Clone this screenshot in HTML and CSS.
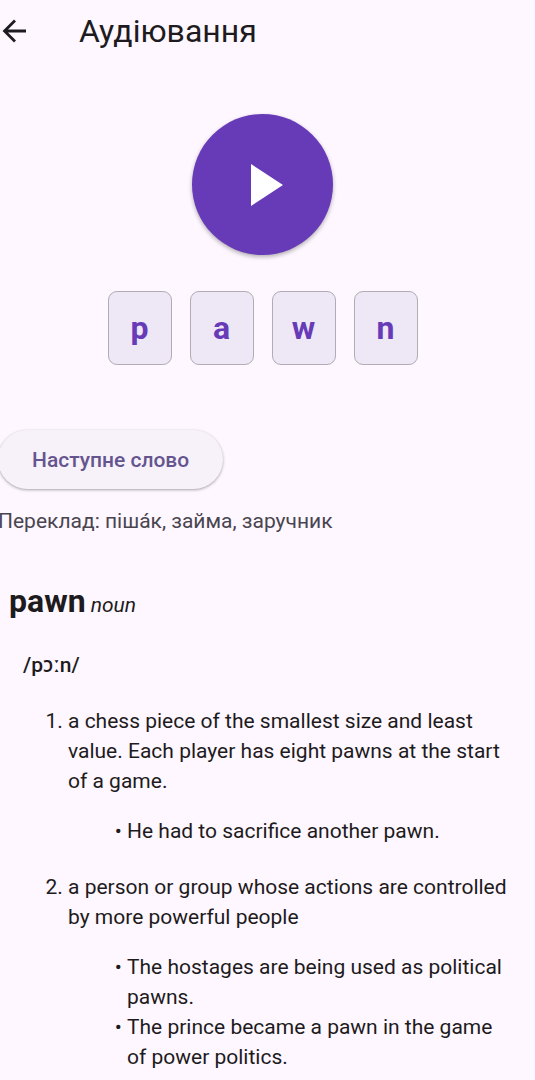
FILE: index.html
```
<!DOCTYPE html>
<html lang="uk">
<head>
  <meta charset="UTF-8" />
  <meta name="viewport" content="width=device-width, initial-scale=1.0" />
  <title>Аудіювання</title>
  <link rel="stylesheet" href="styles.css">
</head>
<body>

  <header>
    <button class="back" type="button" aria-label="Назад">
      <svg viewBox="0 0 24 24" fill="none" stroke="currentColor" stroke-width="2.8">
        <path d="M24 12H2.500M13 1.500L2.500 12L13 22.500" />
      </svg>
    </button>
    <h1>Аудіювання</h1>
  </header>

  <main>
    <button class="play" type="button" aria-label="Відтворити">
      <svg viewBox="0 0 32 42" fill="currentColor">
        <path d="M0 0L32 21L0 42Z" />
      </svg>
    </button>

    <div class="letters">
      <span class="letter">p</span>
      <span class="letter">a</span>
      <span class="letter">w</span>
      <span class="letter">n</span>
    </div>

    <button class="next" type="button">Наступне слово</button>
    <p class="translation">Переклад: піша́к, займа, заручник</p>

    <!-- Dictionary entry -->
    <article class="entry" lang="en">
      <h2>pawn<em> noun</em></h2>
      <p class="phonetic">/pɔːn/</p>
      <ol class="meanings">
        <li>
          a chess piece of the smallest size and least value. Each player has eight pawns at the start of a game.
          <ul class="examples">
            <li>He had to sacrifice another pawn.</li>
          </ul>
        </li>
        <li>
          a person or group whose actions are controlled by more powerful people
          <ul class="examples">
            <li>The hostages are being used as political pawns.</li>
            <li>The prince became a pawn in the game of power politics.</li>
          </ul>
        </li>
      </ol>
    </article>
  </main>

</body>
</html>
```
FILE: styles.css
```
* {
  box-sizing: border-box;
}
body {
  margin: 0;
  font-family: Roboto, "Noto Sans", sans-serif;
  font-size: 21px;
  line-height: 30px;
  background: #fef7ff;
  color: #1d1b20;
  overflow-x: hidden;
}
h1,
h2,
p,
ol,
ul {
  margin: 0;
  padding: 0;
}
button {
  border: none;
  font-family: inherit;
  cursor: pointer;
}

header {
  display: flex;
  align-items: center;
  gap: 53px;
  height: 62px;
}
.back {
  display: flex;
  padding: 0 0 0 2px;
  background: none;
  color: #1d1b20;
}
.back svg {
  width: 24px;
  height: 24px;
}
h1 {
  font-size: 32px;
  font-weight: 400;
  line-height: 40px;
}

main {
  display: flex;
  flex-direction: column;
  align-items: flex-start;
  margin-left: -2px;
  padding: 52px 8px 8px 0;
}
.play {
  display: flex;
  align-items: center;
  justify-content: center;
  align-self: center;
  width: 141px;
  height: 141px;
  padding: 0 0 0 8px;
  border-radius: 50%;
  background: #673ab7;
  color: #fff;
  box-shadow: 0 2px 4px rgba(0, 0, 0, 0.3);
}
.play svg {
  width: 32px;
  height: 42px;
}

.letters {
  display: flex;
  align-self: center;
  gap: 18px;
  margin-top: 36px;
}
.letter {
  display: flex;
  align-items: center;
  justify-content: center;
  width: 64px;
  height: 74px;
  border: 1px solid #b0adb5;
  border-radius: 9px;
  background: #ede7f6;
  color: #673ab7;
  font-size: 32px;
  font-weight: 700;
}

.next {
  height: 59px;
  margin-top: 65px;
  padding: 0 34px;
  border-radius: 30px;
  background: #f7f2fa;
  color: #65558f;
  font-size: 21px;
  font-weight: 500;
  box-shadow: 0 1px 3px rgba(0, 0, 0, 0.35);
}
.translation {
  margin-top: 17px;
  color: #49454f;
}

.entry {
  padding: 0 16px 0 11px;
}
h2 {
  margin-top: 44px;
  font-size: 32px;
  font-weight: 700;
  line-height: 42px;
}
h2 em {
  font-size: 21px;
  font-weight: 400;
}
.phonetic {
  margin-top: 24px;
  padding-left: 14px;
  font-weight: 500;
}
.meanings {
  margin-top: 26px;
  padding-left: 59px;
}
.meanings > li + li {
  margin-top: 26px;
}
.examples {
  margin-top: 20px;
  padding-left: 59px;
  list-style-type: "• ";
}
```
